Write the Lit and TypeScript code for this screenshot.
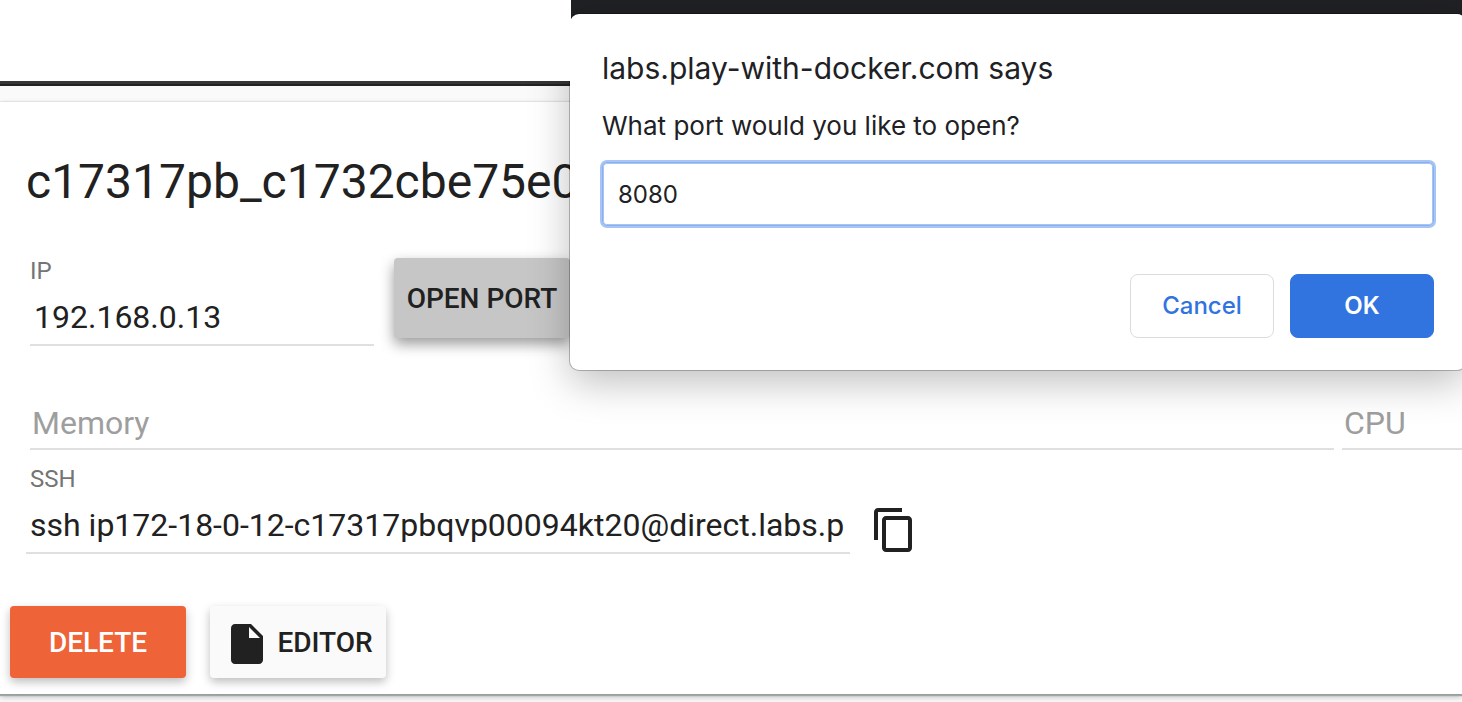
import { LitElement, html, css } from "lit";
import { customElement, property } from "lit/decorators.js";

@customElement("port-prompt")
class PortPrompt extends LitElement {
  @property() site = "";
  @property() message = "";
  @property() port = "";

  static styles = css`
    :host {
      display: block;
      box-sizing: border-box;
      padding: 32px;
      background: #fff;
      border-radius: 9px;
      color: #202124;
      font-family: Inter, "Liberation Sans", sans-serif;
      box-shadow: 0 0 0 1px rgba(0, 0, 0, 0.24), 0 12px 40px rgba(0, 0, 0, 0.26);
    }
    .site {
      margin: 0;
      padding-top: 2px;
      font-size: 30px;
      line-height: 40px;
      font-weight: 400;
    }
    .message {
      display: block;
      margin-top: 22px;
      font-size: 26px;
      line-height: 32px;
    }
    .port {
      display: block;
      box-sizing: border-box;
      width: 100%;
      height: 64px;
      margin-top: 20px;
      padding: 0 15px;
      border: 1px solid #8ab0ee;
      border-radius: 5px;
      outline: none;
      background: #fff;
      color: #202124;
      font: 24px Inter, "Liberation Sans", sans-serif;
      box-shadow: 0 0 0 2px #a6c4f5, inset 0 0 0 1px #a6c4f5;
    }
    .actions {
      display: flex;
      justify-content: flex-end;
      gap: 16px;
      margin-top: 48px;
    }
    .action {
      width: 144px;
      height: 64px;
      padding: 0 0 2px;
      border: 1px solid #dadce0;
      border-radius: 8px;
      background: #fff;
      color: #3174e0;
      font: 500 24px Inter, "Liberation Sans", sans-serif;
    }
    .primary {
      border-color: #3174e0;
      background: #3174e0;
      color: #fff;
      font-weight: 600;
    }
  `;

  render() {
    return html`
      <h2 class="site">${this.site} says</h2>
      <label class="message" for="port">${this.message}</label>
      <input class="port" id="port" .value=${this.port} />
      <div class="actions">
        <button class="action">Cancel</button>
        <button class="action primary">OK</button>
      </div>
    `;
  }
}

@customElement("app-root")
class AppRoot extends LitElement {
  static styles = css`
    :host {
      display: block;
      position: relative;
      overflow: hidden;
      min-height: 100vh;
      background: #fafafa;
      color: #212121;
      font-family: Roboto, "Liberation Sans", sans-serif;
    }
    .top {
      display: flex;
      height: 81px;
      background: #202124;
    }
    .blank {
      position: relative;
      z-index: 2;
      width: 571px;
      background: #fff;
    }
    .rule {
      height: 5px;
      background: linear-gradient(#363636 60%, #232323 60%);
    }
    .card {
      margin-top: 16px;
      padding: 48px 0 16px;
      background: #fff;
      box-shadow: 0 0 2px rgba(0, 0, 0, 0.2), 0 2px 1px #a4a8a6, 0 3px 6px rgba(0, 0, 0, 0.24);
    }
    .title {
      margin: 0;
      padding-left: 26px;
      font-size: 48px;
      line-height: 64px;
      font-weight: 400;
      white-space: nowrap;
    }
    .row {
      display: flex;
      align-items: flex-start;
      padding-left: 30px;
    }
    .network {
      gap: 20px;
      margin-top: 42px;
    }
    .usage {
      display: grid;
      grid-template-columns: minmax(0, 1fr) 120px;
      gap: 8px;
      margin-top: 48px;
    }
    .shell {
      align-items: flex-end;
      gap: 20px;
      padding-left: 26px;
      margin-top: 14px;
    }
    .field {
      display: flex;
      flex-direction: column;
      gap: 4px;
    }
    .ip {
      width: 344px;
    }
    .ssh {
      width: 824px;
    }
    .caption {
      color: #757575;
      font-size: 24px;
      line-height: 30px;
    }
    .ssh .caption {
      padding-left: 4px;
    }
    .value {
      box-sizing: border-box;
      width: 100%;
      height: 56px;
      padding: 0 4px;
      border: 0;
      border-bottom: 2px solid #e0e0e0;
      border-radius: 0;
      outline: none;
      background: none;
      color: #212121;
      font: 32px Roboto, "Liberation Sans", sans-serif;
    }
    .usage .value {
      padding: 4px 2px 0;
    }
    .value::placeholder {
      color: #9e9e9e;
      opacity: 1;
    }
    .button {
      display: flex;
      align-items: center;
      justify-content: center;
      gap: 6px;
      box-sizing: border-box;
      min-width: 176px;
      height: 72px;
      padding: 0 12px;
      border: 0;
      border-radius: 4px;
      background: #fafafa;
      color: #212121;
      font: 500 28px Roboto, "Liberation Sans", sans-serif;
      white-space: nowrap;
      box-shadow: 0 4px 10px rgba(0, 0, 0, 0.26);
    }
    .open {
      height: 80px;
      margin-top: 2px;
      background: #c6c6c6;
      box-shadow: 0 6px 14px rgba(0, 0, 0, 0.4);
    }
    .delete {
      background: #ee6337;
      color: #fff;
    }
    .copy {
      padding: 0;
      border: 0;
      background: none;
      color: #212121;
    }
    .icon {
      display: block;
      width: 48px;
      height: 48px;
      fill: currentColor;
    }
    .button .icon {
      margin-top: 4px;
    }
    .actions {
      gap: 24px;
      padding-left: 10px;
      margin-top: 52px;
    }
    .prompt {
      position: absolute;
      z-index: 1;
      top: 14px;
      left: 570px;
      right: -4px;
    }
  `;

  render() {
    return html`
      <header class="top"><div class="blank"></div></header>
      <div class="rule"></div>
      <main class="card">
        <h1 class="title">c17317pb_c1732cbe75e0</h1>
        <div class="row network">
          <div class="field ip">
            <label class="caption" for="ip">IP</label>
            <input class="value" id="ip" readonly value="192.168.0.13" />
          </div>
          <button class="button open">OPEN PORT</button>
        </div>
        <div class="row usage">
          <input class="value" aria-label="Memory" readonly placeholder="Memory" />
          <input class="value" aria-label="CPU" readonly placeholder="CPU" />
        </div>
        <div class="row shell">
          <div class="field ssh">
            <label class="caption" for="ssh">SSH</label>
            <input
              class="value"
              id="ssh"
              readonly
              value="ssh ip172-18-0-12-c17317pbqvp00094kt20@direct.labs.play-with-docker.com"
            />
          </div>
          <button class="copy" aria-label="Copy">
            <svg class="icon" viewBox="0 0 24 24">
              <path
                d="M16 1H4c-1.1 0-2 .9-2 2v14h2V3h12V1zm3 4H8c-1.1 0-2 .9-2 2v14c0 1.1.9 2 2 2h11c1.1 0 2-.9 2-2V7c0-1.1-.9-2-2-2zm0 16H8V7h11v14z"
              />
            </svg>
          </button>
        </div>
        <div class="row actions">
          <button class="button delete">DELETE</button>
          <button class="button">
            <svg class="icon" viewBox="0 0 24 24">
              <path
                d="M6 2c-1.1 0-1.99.9-1.99 2L4 20c0 1.1.89 2 1.99 2H18c1.1 0 2-.9 2-2V8l-6-6H6zm7 7V3.5L18.5 9H13z"
              />
            </svg>
            EDITOR
          </button>
        </div>
      </main>
      <port-prompt
        class="prompt"
        role="dialog"
        site="labs.play-with-docker.com"
        message="What port would you like to open?"
        port="8080"
      ></port-prompt>
    `;
  }
}
